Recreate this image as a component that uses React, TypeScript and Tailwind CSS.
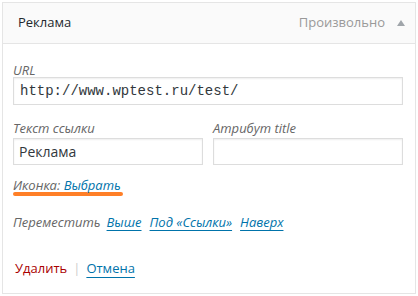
import React from "react";

export default function App() {
  return (
    <div className="w-[418px] h-[296px] bg-white pt-[2px] pl-[2px] font-['Open_Sans',sans-serif]">
      <div className="w-[414px] h-[292px] border border-[#e5e5e5] flex flex-col">
        <div className="h-[41px] shrink-0 bg-[#fafafa] border-b border-[#e5e5e5] flex items-center justify-between pl-[15px] pr-[10px]">
          <span className="text-[13px] text-[#23282d]">Реклама</span>
          <div className="flex items-center gap-[12px]">
            <span className="text-[13px] text-[#999]">Произвольно</span>
            <svg width="8" height="6" viewBox="0 0 8 6"><path d="M0 6 L4 0 L8 6 Z" fill="#a0a5aa" /></svg>
          </div>
        </div>
        <div className="pl-[10px] pr-[10px] pt-[19px] text-[13px]">
          <div className="italic text-[#666] leading-[14px] h-[14px]">URL</div>
          <div className="h-[28px] w-[390px] border border-[#ddd] flex items-center px-[6px] font-['Liberation_Mono',monospace] text-[14px] text-[#32373c] shadow-[inset_0_1px_2px_rgba(0,0,0,0.07)]">
            http://www.wptest.ru/test/
          </div>
          <div className="mt-[16px] flex gap-[10px]">
            <div className="w-[190px]">
              <div className="italic text-[#666] leading-[14px] h-[14px]">Текст ссылки</div>
              <div className="mt-[3px] h-[27px] border border-[#ddd] flex items-center px-[5px] text-[14px] text-[#32373c] shadow-[inset_0_1px_2px_rgba(0,0,0,0.07)]">Реклама</div>
            </div>
            <div className="w-[190px]">
              <div className="italic text-[#666] leading-[14px] h-[14px]">Атрибут title</div>
              <div className="mt-[3px] h-[27px] border border-[#ddd] shadow-[inset_0_1px_2px_rgba(0,0,0,0.07)]"></div>
            </div>
          </div>
          <div className="mt-[13px] w-[110px]">
            <div className="italic leading-[14px] h-[14px] whitespace-nowrap">
              <span className="text-[#666]">Иконка: </span>
              <span className="text-[#0073aa]">Выбрать</span>
            </div>
            <div className="h-[4px] bg-[#ff7f27] rounded-full"></div>
          </div>
          <div className="mt-[19px] italic leading-[14px] h-[14px] flex">
            <span className="text-[#666]">Переместить</span>
            <span className="ml-[6px] text-[#0073aa] underline underline-offset-[3px]">Выше</span>
            <span className="ml-[8px] text-[#0073aa] underline underline-offset-[3px]">Под «Ссылки»</span>
            <span className="ml-[8px] text-[#0073aa] underline underline-offset-[3px]">Наверх</span>
          </div>
          <div className="mt-[32px] pl-[2px] leading-[14px] h-[14px] flex items-center text-[13px]">
            <span className="text-[#a00]">Удалить</span>
            <span className="text-[#ccc] mx-[6px]">|</span>
            <span className="text-[#0073aa] underline underline-offset-[4px]">Отмена</span>
          </div>
        </div>
      </div>
    </div>
  );
}
